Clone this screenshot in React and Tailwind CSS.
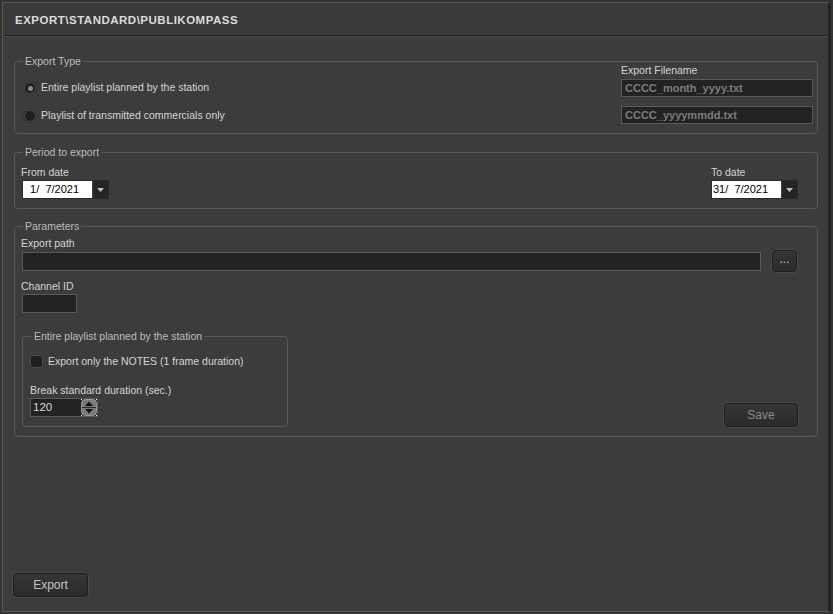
import React from "react";

const font = { fontFamily: '"Liberation Sans", Arial, sans-serif' };

function Legend({ children, className = "" }) {
  return (
    <span className={"absolute -top-[7px] left-[8px] bg-[#3c3c3c] px-[2px] text-[10.5px] leading-[13px] text-[#bdbdbd] " + className}>
      {children}
    </span>
  );
}

function Radio({ checked, label }) {
  return (
    <div className="flex h-[14px] items-center">
      <span className="ml-[9px] flex h-[12px] w-[12px] items-center justify-center rounded-full border border-[#4a4a4a] bg-[#1f1f1f] shadow-[0_0_0_1px_#333]">
        {checked && <span className="h-[5px] w-[5px] rounded-full bg-[#8a8a8a]" />}
      </span>
      <span className="ml-[5px] text-[10.5px] text-[#d4d4d4]">{label}</span>
    </div>
  );
}

function DateInput({ value }) {
  return (
    <div className="flex h-[19px] w-[87px] border border-[#2a2a2a]">
      <div className="flex flex-1 items-center whitespace-pre bg-white pl-[1px] text-[11px] text-black">{value}</div>
      <div className="flex w-[16px] items-center justify-center border-l border-[#444] bg-[#242424]">
        <svg width="7" height="4" viewBox="0 0 7 4">
          <path d="M0 0 L7 0 L3.5 4 Z" fill="#c0c0c0" />
        </svg>
      </div>
    </div>
  );
}

function Btn({ children, className = "", text = "text-[#9a9a9a]" }) {
  return (
    <div className={"flex items-center justify-center rounded-[4px] border border-[#1e1e1e] bg-gradient-to-b from-[#363636] to-[#2b2b2b] shadow-[0_0_0_1px_#4a4a4a] text-[12px] " + text + " " + className}>
      {children}
    </div>
  );
}

export default function App() {
  return (
    <div style={font} className="h-[614px] w-[833px] overflow-hidden bg-[#333333] p-[2px]">
      <div className="flex h-full flex-col border-l border-t border-b border-[#585858] border-r-[3px] border-r-[#242424] bg-[#3c3c3c]">
        {/* Header */}
        <div className="flex h-[33px] items-center border-b border-[#202020] bg-[#3a3a3a] pl-[12px] pt-[3px]">
          <span className="text-[11.5px] font-bold tracking-[0.5px] text-[#dcdcdc]">EXPORT\STANDARD\PUBLIKOMPASS</span>
        </div>
        <div className="h-px bg-[#4c4c4c]" />

        <div className="flex flex-1 flex-col pl-[11px] pr-[10px]">
          {/* Export Type */}
          <div className="relative mt-[24px] flex h-[73px] rounded-[4px] border border-[#5a5a5a]">
            <Legend>Export Type</Legend>
            <div className="flex flex-1 flex-col gap-[14px] pt-[19px]">
              <Radio checked label="Entire playlist planned by the station" />
              <Radio label="Playlist of transmitted commercials only" />
            </div>
            <div className="mr-[4px] flex w-[192px] flex-col pt-[1px]">
              <div className="h-[14px] text-[10.5px] leading-[14px] text-[#d4d4d4]">Export Filename</div>
              <div className="mt-[2px] flex h-[18px] items-center border border-[#5a5a5a] bg-[#222222] pl-[3px] text-[11px] font-bold text-[#7c7c7c]">CCCC_month_yyyy.txt</div>
              <div className="mt-[9px] flex h-[18px] items-center border border-[#5a5a5a] bg-[#222222] pl-[3px] text-[11px] font-bold text-[#7c7c7c]">CCCC_yyyymmdd.txt</div>
            </div>
          </div>

          {/* Period */}
          <div className="relative mt-[18px] flex h-[57px] items-start justify-between rounded-[4px] border border-[#5a5a5a] pl-[6px] pr-[19px] pt-[13px]">
            <Legend>Period to export</Legend>
            <div className="flex flex-col">
              <div className="h-[13px] text-[10.5px] leading-[13px] text-[#d4d4d4]">From date</div>
              <div className="ml-[1px] mt-[1px]"><DateInput value="  1/  7/2021" /></div>
            </div>
            <div className="flex flex-col">
              <div className="h-[13px] text-[10.5px] leading-[13px] text-[#d4d4d4]">To date</div>
              <div className="mt-[1px]"><DateInput value="31/  7/2021" /></div>
            </div>
          </div>

          {/* Parameters */}
          <div className="relative mt-[17px] flex h-[211px] flex-col rounded-[4px] border border-[#5a5a5a] pl-[6px] pt-[10px]">
            <Legend>Parameters</Legend>
            <div className="h-[13px] text-[10.5px] leading-[13px] text-[#d4d4d4]">Export path</div>
            <div className="flex items-center">
              <div className="ml-[1px] h-[19px] w-[739px] border border-[#5a5a5a] bg-[#232323]" />
              <Btn className="ml-[11px] h-[22px] w-[25px] pb-[4px]" text="text-[#c8c8c8]">...</Btn>
            </div>
            <div className="mt-[8px] h-[13px] text-[10.5px] leading-[13px] text-[#d4d4d4]">Channel ID</div>
            <div className="ml-[1px] mt-[1px] h-[19px] w-[55px] border border-[#5a5a5a] bg-[#232323]" />

            <div className="flex items-end justify-between pr-[19px]">
              <div className="relative ml-[1px] mt-[23px] h-[91px] w-[266px] rounded-[4px] border border-[#5a5a5a] pl-[7px]">
                <Legend className="left-[9px]">Entire playlist planned by the station</Legend>
                <div className="mt-[17px] flex items-center">
                  <span className="h-[13px] w-[13px] rounded-[3px] border border-[#4a4a4a] bg-[#1f1f1f]" />
                  <span className="ml-[5px] text-[10.5px] text-[#d4d4d4]">Export only the NOTES (1 frame duration)</span>
                </div>
                <div className="mt-[14px] h-[13px] text-[10.5px] leading-[13px] text-[#d4d4d4]">Break standard duration (sec.)</div>
                <div className="mt-[1px] flex h-[19px] w-[68px] items-center border border-[#5a5a5a] bg-[#222222]">
                  <span className="flex-1 pl-[2px] text-[11.5px] text-[#d8d8d8]">120</span>
                  <svg width="16" height="17" viewBox="0 0 16 17">
                    <rect x="0.5" y="0.5" width="15" height="16" rx="4" fill="#7b7b7b" stroke="#9a9a9a" />
                    <line x1="1" y1="8.5" x2="15" y2="8.5" stroke="#2a2a2a" strokeWidth="1" />
                    <path d="M4 7 L8 2.5 L12 7 Z" fill="#111" />
                    <path d="M4 10 L8 14.5 L12 10 Z" fill="#111" />
                    <rect x="0" y="0" width="1" height="1" fill="#fff" />
                    <rect x="15" y="0" width="1" height="1" fill="#fff" />
                    <rect x="0" y="16" width="1" height="1" fill="#fff" />
                    <rect x="15" y="16" width="1" height="1" fill="#fff" />
                  </svg>
                </div>
              </div>
              <Btn className="h-[24px] w-[74px]" text="text-[#8a8a8a]">Save</Btn>
            </div>
          </div>

          <div className="flex-1" />
          <div className="mb-[14px] -ml-[1px]">
            <Btn className="h-[24px] w-[75px]" text="text-[#c4c4c4]">Export</Btn>
          </div>
        </div>
      </div>
    </div>
  );
}
